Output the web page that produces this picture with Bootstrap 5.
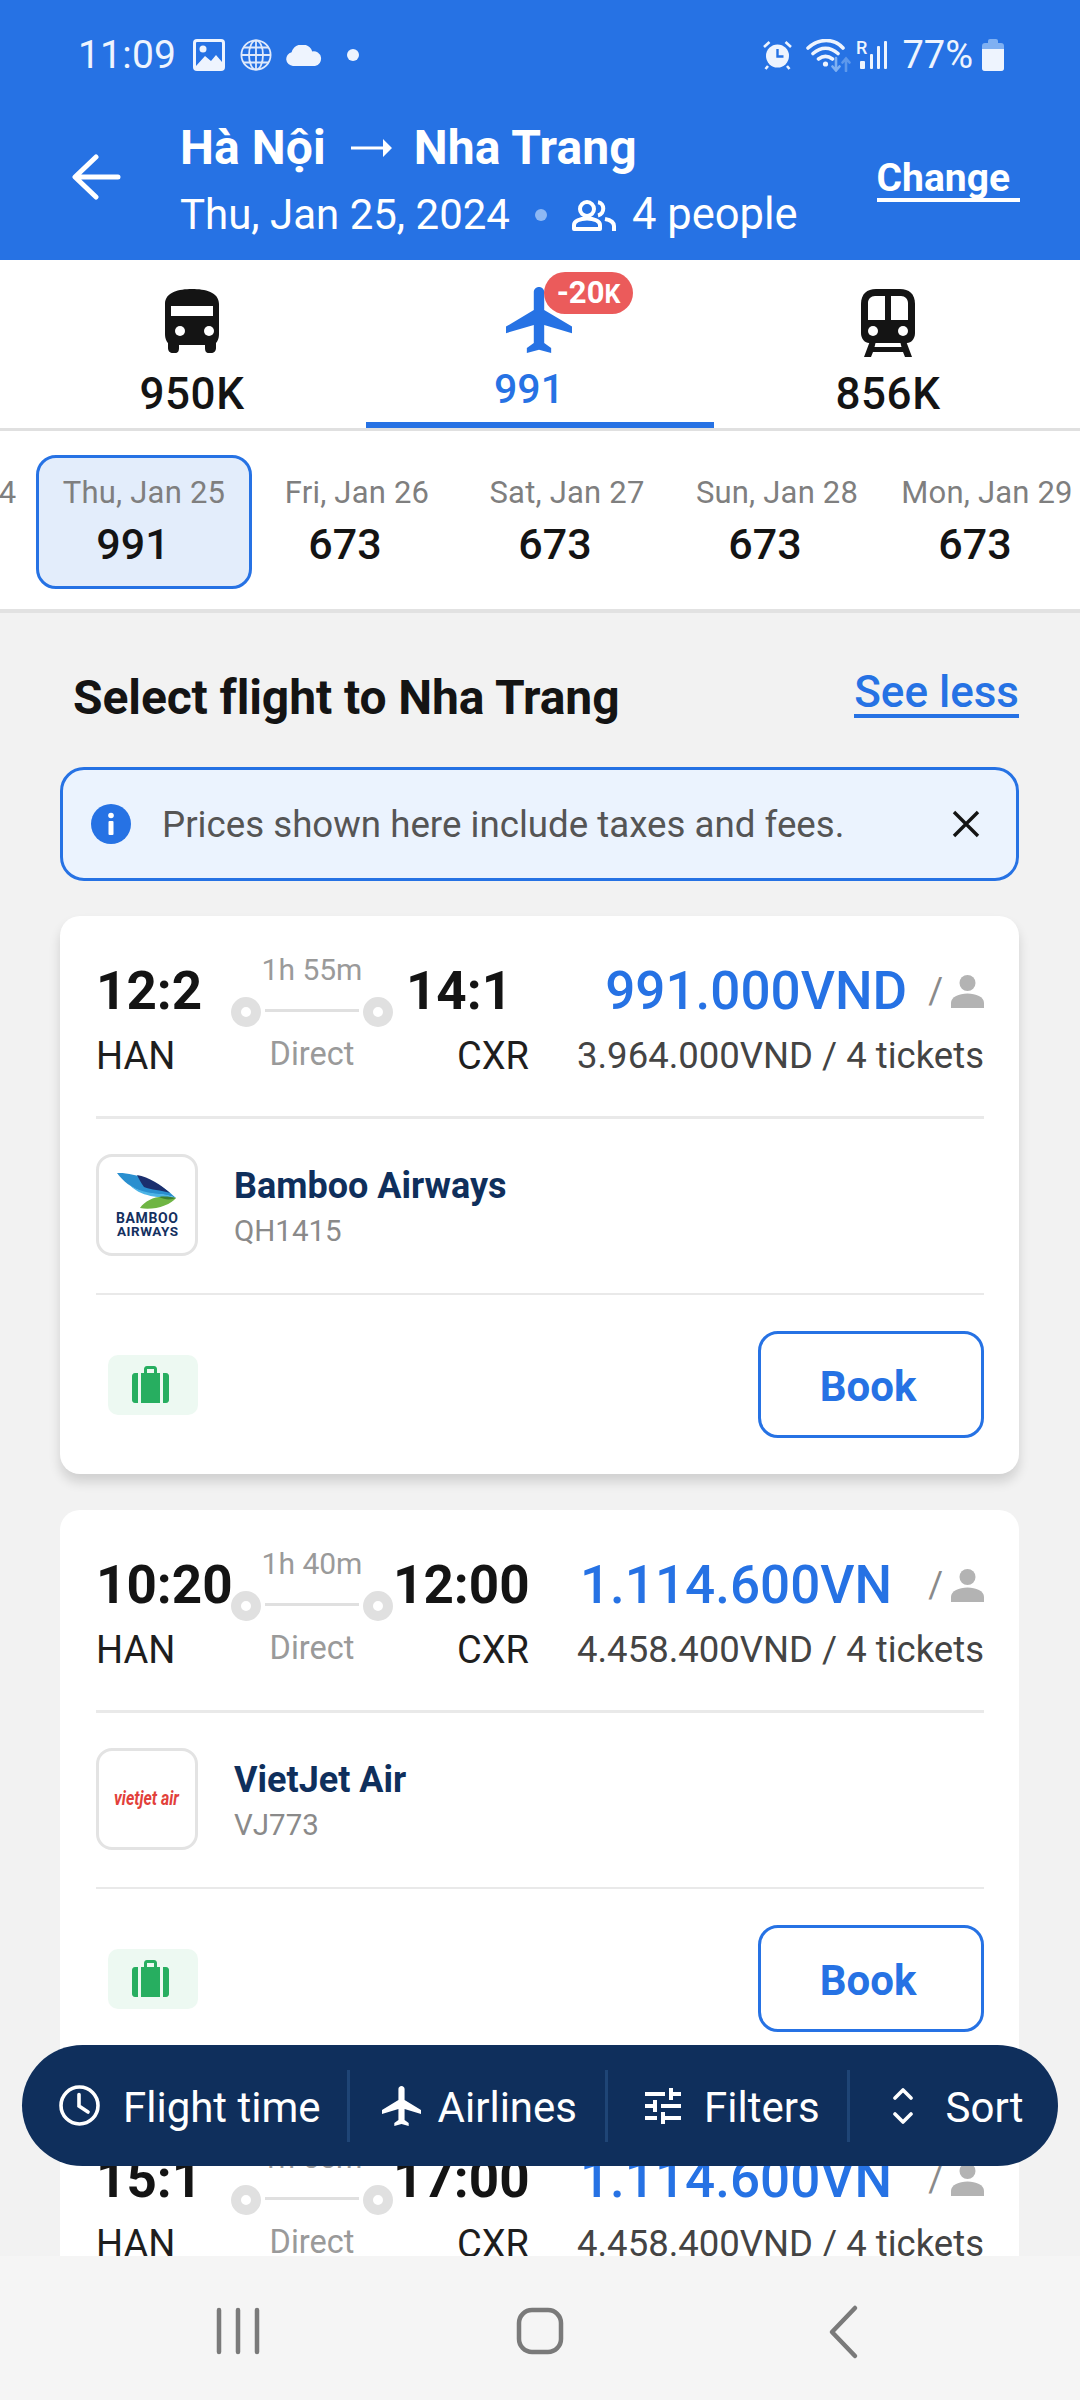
<!DOCTYPE html>
<html lang="en">
<head>
<meta charset="utf-8">
<title>Select flight</title>
<link rel="stylesheet" href="https://cdn.jsdelivr.net/npm/bootstrap@5.3.0/dist/css/bootstrap.min.css">
<style>
:root{--brand:#2672e4;--navy:#0f2f5c;}
html,body{margin:0;background:#f2f2f2;}
body{font-family:Roboto,"Liberation Sans",sans-serif;}
.screen{width:1080px;height:2400px;position:relative;overflow:hidden;}
.top-blue{background:var(--brand);height:260px;color:#fff;flex:none;}
.stat-row{height:110px;padding:0 76px 0 78px;color:#eef4fe;}
.stat-time{font-size:39px;line-height:1;letter-spacing:.2px;}
.stat-pct{font-size:38px;line-height:1;}
.sig-ic{overflow:visible;}
.route-row{padding-left:72px;padding-right:60px;height:127px;padding-top:8px;}
.back-ic{width:49px;height:46px;margin-right:59px;margin-top:36px;}
.route-title{font-size:48px;font-weight:700;line-height:60px;letter-spacing:.1px;}
.route-sub{font-size:42px;line-height:60px;margin-top:7px;}
.sub-people{font-size:43.500px;}
.sub-dot{width:12px;height:12px;border-radius:50%;background:#8db8f4;margin:0 25px 0 25px;}
.change-link{font-size:39px;font-weight:700;line-height:40px;color:#fff;text-decoration:none;border-bottom:4px solid #fff;padding:3px 10px 0 0;margin-top:37px;}
.mode-tabs{height:171px;background:#fff;border-bottom:3px solid #e0e0e0;flex:none;}
.mode-side{width:366px;padding-top:29px;}
.mode-side.lft{padding-left:18px;}
.mode-side.rgt{padding-right:18px;}
.mode-mid{width:348px;height:168px;border-bottom:6px solid var(--brand);padding-top:27px;position:relative;}
.mode-price{font-size:44px;line-height:48px;font-weight:500;color:#141414;letter-spacing:.6px;}
.mode-mid .mode-price{font-size:41px;color:var(--brand);margin-right:22px;letter-spacing:0;margin-top:12px;}
.promo-tag{position:absolute;left:178px;top:12px;width:89px;height:42px;border-radius:21px;background:#eb5b5b;color:#fff;font-size:31px;font-weight:700;line-height:42px;text-align:center;}
.promo-tag small{font-size:25px;font-weight:700;}
.date-strip{height:182px;background:#fff;border-bottom:4px solid #e2e2e2;flex:none;overflow:hidden;}
.date-track{margin-left:-174px;padding-top:24px;}
.date-cell{width:210px;height:134px;flex:none;text-align:center;padding-top:18px;white-space:nowrap;}
.date-cell.on{width:216px;background:#e3edfb;border:3px solid var(--brand);border-radius:20px;padding-top:15px;}
.date-lbl{font-size:31px;line-height:40px;color:#7f7f7f;letter-spacing:.2px;}
.date-num{font-size:43px;line-height:50px;font-weight:500;color:#141414;margin-right:24px;margin-top:6px;}
.date-cell.on .date-num{margin-right:22px;}
.list-wrap{flex:1 1 auto;overflow:hidden;padding:0 61px 0 60px;background:#f2f2f2;min-height:0;}
.list-head{padding:57px 0 0 13px;height:154px;}
.list-title{font-size:48px;line-height:56px;font-weight:700;color:#141414;margin:0;letter-spacing:-.1px;}
.see-link{font-size:44px;line-height:44px;font-weight:500;color:var(--brand);text-decoration:none;border-bottom:4px solid var(--brand);}
.tip-box{height:114px;border:3px solid var(--brand);border-radius:24px;background:#ebf3fe;padding:0 36px 0 28px;margin:0 0 35px;color:#555;}
.tip-text{font-size:36.700px;line-height:46px;margin-left:31px;padding-top:2px;}
.fare-card{height:558px;border:0;border-radius:20px;margin-bottom:36px;padding:36px 35px 36px 36px;background:#fff;}
.fare-card.lift{box-shadow:0 8px 12px rgba(0,0,0,.14);}
.leg-col{width:135px;padding-top:7px;}
.leg-col.arr{width:136px;}
.clock-txt{font-size:53px;line-height:64px;font-weight:700;color:#141414;white-space:nowrap;}
.leg-col.arr .clock-txt{width:132px;text-align:center;}
.port-txt{font-size:38px;line-height:46px;color:#1e1e1e;margin-top:10px;}
.leg-col.arr .port-txt{text-align:right;}
.track-col{width:162px;text-align:center;}
.track-txt{font-size:30px;line-height:36px;color:#9a9a9a;white-space:nowrap;}
.track-txt.via{font-size:32.500px;}
.track-line{height:30px;margin:9px 0;}
.track-pin{width:30px;height:30px;border-radius:50%;border:10px solid #e0e0e0;background:#fff;flex:none;}
.track-bar{flex:1 1 auto;height:3px;background:#e0e0e0;margin:0 4px 4px;}
.cost-col{flex:1 1 auto;padding-top:7px;text-align:right;}
.cost-txt{font-size:53px;line-height:64px;font-weight:500;color:var(--brand);white-space:nowrap;}
.cost-slash{font-size:36px;color:#8a8a8a;margin:0 8px 0 21px;line-height:64px;}
.cost-slash.wide{margin-left:36px;}
.cost-sub{font-size:36.500px;line-height:46px;color:#444;margin-top:10px;white-space:nowrap;}
.rule{height:3px;background:#e9e9e9;}
.rule.one{margin-top:37px;}
.carrier-row{margin:35px 0 37px;height:102px;}
.carrier-logo{width:102px;height:102px;border:3px solid #e3e3e3;border-radius:16px;flex:none;margin-right:36px;}
.carrier-text{padding-top:7px;}
.carrier-name{font-size:36px;line-height:46px;font-weight:700;color:#0f2f5c;}
.carrier-code{font-size:29.500px;line-height:44px;color:#8a8a8a;}
.foot-row{margin-top:36px;}
.bag-chip{width:90px;height:60px;border-radius:10px;background:#edf9f2;margin-left:12px;}
.bag-chip svg{margin-right:6px;}
.book-btn{width:226px;height:107px;border:3px solid var(--brand);border-radius:20px;background:#fff;color:var(--brand);font-size:42px;font-weight:700;line-height:1;padding:4px 12px 0 6px;}
.book-btn:hover{background:#fff;color:var(--brand);border-color:var(--brand);}
.float-bar{position:absolute;left:22px;top:2045px;width:1036px;height:121px;border-radius:61px;background:var(--navy);color:#fff;padding-left:37px;}
.float-lbl{font-size:42px;line-height:50px;color:#fff;white-space:nowrap;padding-top:5px;}
.float-sep{width:3px;height:72px;background:#1f4576;flex:none;}
.sys-nav{height:144px;background:#f5f5f5;flex:none;position:relative;z-index:2;}
</style>
</head>
<body>
<div class="screen d-flex flex-column">
  <header class="top-blue">
    <div class="stat-row d-flex align-items-center justify-content-between">
      <div class="d-flex align-items-center">
        <span class="stat-time">11:09</span>
        <svg width="32" height="32" viewBox="0 0 32 32" style="margin-left:17px"><rect width="32" height="32" rx="4" fill="#eef4fe"/><rect x="3" y="3" width="26" height="26" rx="1" fill="#2672e4"/><path d="M3 27 L12 17 L18 22 L23 16 L29 23 V29 H3Z" fill="#eef4fe"/><circle cx="10" cy="10" r="3.500" fill="#eef4fe"/></svg>
        <svg width="32" height="32" viewBox="0 0 32 32" style="margin-left:15px" fill="none" stroke="#dfe9fb" stroke-width="1.800"><circle cx="16" cy="16" r="14.600"/><ellipse cx="16" cy="16" rx="7" ry="14.600"/><path d="M16 1.500V30.500M1.500 16H30.500M4 8.500H28M4 23.500H28"/></svg>
        <svg width="37" height="21" viewBox="0 0 37 21" style="margin-left:13px"><path d="M8 21a7 7 0 0 1-1.400-13.800A11 11 0 0 1 27.300 6.400 7.400 7.400 0 0 1 30 21Z" fill="#eef4fe"/></svg>
        <span class="rounded-circle" style="width:12px;height:12px;background:#eef4fe;margin-left:25px"></span>
      </div>
      <div class="d-flex align-items-center">
        <svg width="29" height="30" viewBox="0 0 29 30"><circle cx="14.500" cy="16" r="11.500" fill="#eef4fe"/><path d="M14.500 9v7.500h6" stroke="#2672e4" stroke-width="2.400" fill="none"/><path d="M1 7 6.500 2M28 7 22.500 2M5 26 2.500 29M24 26l2.500 3" stroke="#eef4fe" stroke-width="2.600" fill="none"/></svg>
        <svg width="46" height="33" viewBox="0 0 46 33" style="margin-left:14px" fill="none" stroke-linecap="round"><path d="M2 9C13-1 28-1 37 9M7 14.500C15 7.500 24 7.500 32 14.500M12.500 20C17 16.500 22 16.500 26.500 20" stroke="#eef4fe" stroke-width="3.600"/><circle cx="19.500" cy="25" r="2.600" fill="#eef4fe"/><path d="M30 19V31M26.500 27.500 30 31.500 33.500 27.500" stroke="#7fb0f2" stroke-width="2.600"/><path d="M40 32V20M36.500 23.500 40 19.500 43.500 23.500" stroke="#5d98ec" stroke-width="2.600"/></svg>
        <svg class="sig-ic" width="32" height="32" viewBox="0 0 32 32" style="margin-left:4px"><rect x="4" y="22" width="5" height="8" rx="1" fill="#eef4fe"/><rect x="14" y="15" width="3" height="15" rx="1" fill="#eef4fe"/><rect x="21" y="7" width="3" height="23" rx="1" fill="#eef4fe"/><rect x="28" y="2" width="3" height="28" rx="1" fill="#eef4fe"/><text x="0" y="15" font-family="Roboto" font-size="18" font-weight="500" fill="#eef4fe">R</text></svg>
        <span class="stat-pct" style="margin-left:14px">77%</span>
        <svg width="22" height="32" viewBox="0 0 22 32" style="margin-left:9px"><path d="M6 2a2 2 0 0 1 2-2h6a2 2 0 0 1 2 2v2h3a3 3 0 0 1 3 3v22a3 3 0 0 1-3 3H3a3 3 0 0 1-3-3V7a3 3 0 0 1 3-3h3Z" fill="#7fb0f2"/><path d="M0 10H22V29a3 3 0 0 1-3 3H3a3 3 0 0 1-3-3Z" fill="#eef4fe"/></svg>
      </div>
    </div>
    <div class="route-row d-flex align-items-start">
      <svg class="back-ic" viewBox="0 0 49 46" fill="none" stroke="#fff" stroke-width="5" stroke-linecap="round" stroke-linejoin="round"><path d="M46 23H4M24 3 3 23 24 43"/></svg>
      <div class="flex-grow-1">
        <div class="route-title d-flex align-items-center">Hà Nội
          <svg width="41" height="18" viewBox="0 0 41 18" style="margin:0 22px 0 25px"><path d="M0 7.500H32V0L41 9 32 18V10.500H0Z" fill="#fff"/></svg>Nha Trang</div>
        <div class="route-sub d-flex align-items-center">Thu, Jan 25, 2024<span class="sub-dot"></span>
          <svg width="44" height="31" viewBox="0 0 44 31" fill="none" stroke="#fff" stroke-width="4" style="margin-right:16px"><circle cx="15" cy="9" r="7"/><path d="M2 29V25C2 21 8 18.500 15 18.500S28 21 28 25V29ZM26 2.200C33 3 33 14 26 15.500M33 19C38 20 42 22 42 26V31" stroke-linejoin="round"/></svg><span class="sub-people">4 people</span></div>
      </div>
      <a class="change-link" href="#">Change</a>
    </div>
  </header>

  <section class="mode-tabs d-flex">
    <div class="mode-side lft d-flex flex-column align-items-center">
      <svg width="54" height="64" viewBox="0 0 54 64"><path d="M0 15C0 3 14 0 27 0S54 3 54 15V45C54 50 52 53 51 54V59C51 62 49 64 46 64H44C41 64 40 62 40 59V56H14V59C14 62 13 64 10 64H8C5 64 3 62 3 59V54C2 53 0 50 0 45Z" fill="#141414"/><rect x="6" y="17" width="42" height="10" fill="#fff"/><circle cx="15" cy="42" r="5" fill="#fff"/><circle cx="44" cy="42" r="5" fill="#fff"/></svg>
      <div class="mode-price" style="margin-top:17px">950K</div>
    </div>
    <div class="mode-mid d-flex flex-column align-items-center">
      <svg width="66" height="66" viewBox="2 2 19 20" preserveAspectRatio="none" style="margin-right:2px"><path d="M21 16v-2l-8-5V3.500c0-.83-.67-1.500-1.500-1.500S10 2.670 10 3.500V9l-8 5v2l8-2.500V19l-2 1.500V22l3.500-1 3.500 1v-1.500L13 19v-5.500l8 2.500z" fill="#2672e4"/></svg>
      <div class="mode-price">991</div>
      <span class="promo-tag">-20<small>K</small></span>
    </div>
    <div class="mode-side rgt d-flex flex-column align-items-center">
      <svg width="54" height="68" viewBox="0 0 54 68"><path d="M0 15C0 5 6 0 15 0H39C48 0 54 5 54 15V44C54 50 50 54 46 54H8C4 54 0 50 0 44Z" fill="#141414"/><path d="M7 31V14C7 10 10 7 14 7H24V31ZM30 7H40C44 7 47 10 47 14V31H30Z" fill="#fff"/><circle cx="12" cy="42" r="5" fill="#fff"/><circle cx="42" cy="42" r="5" fill="#fff"/><path d="M9 52H15L13.500 58H40.500L39 52H45L51 68H44L42 63H12L10 68H3Z" fill="#141414"/></svg>
      <div class="mode-price" style="margin-top:13px">856K</div>
    </div>
  </section>

  <section class="date-strip">
    <div class="date-track d-flex">
      <div class="date-cell"><div class="date-lbl">Wed, Jan 24</div><div class="date-num">673</div></div>
      <div class="date-cell on"><div class="date-lbl">Thu, Jan 25</div><div class="date-num">991</div></div>
      <div class="date-cell"><div class="date-lbl">Fri, Jan 26</div><div class="date-num">673</div></div>
      <div class="date-cell"><div class="date-lbl">Sat, Jan 27</div><div class="date-num">673</div></div>
      <div class="date-cell"><div class="date-lbl">Sun, Jan 28</div><div class="date-num">673</div></div>
      <div class="date-cell"><div class="date-lbl">Mon, Jan 29</div><div class="date-num">673</div></div>
    </div>
  </section>

  <main class="list-wrap">
    <div class="list-head d-flex justify-content-between align-items-start">
      <h1 class="list-title">Select flight to Nha Trang</h1>
      <a class="see-link" href="#">See less</a>
    </div>
    <div class="alert tip-box d-flex align-items-center justify-content-between">
      <div class="d-flex align-items-center">
        <svg width="40" height="40" viewBox="0 0 40 40"><circle cx="20" cy="20" r="20" fill="#2672e4"/><circle cx="20" cy="11.500" r="2.800" fill="#fff"/><rect x="17.500" y="17" width="5" height="14" rx="1" fill="#fff"/></svg>
        <span class="tip-text">Prices shown here include taxes and fees.</span>
      </div>
      <svg width="28" height="28" viewBox="0 0 28 28" stroke="#141414" stroke-width="3.400"><path d="M2 2 26 26M26 2 2 26"/></svg>
    </div>

    <article class="card fare-card lift">
      <div class="d-flex">
        <div class="leg-col"><div class="clock-txt">12:2</div><div class="port-txt">HAN</div></div>
        <div class="track-col">
          <div class="track-txt">1h 55m</div>
          <div class="track-line d-flex align-items-center"><span class="track-pin"></span><span class="track-bar"></span><span class="track-pin"></span></div>
          <div class="track-txt via">Direct</div>
        </div>
        <div class="leg-col arr"><div class="clock-txt">14:1</div><div class="port-txt">CXR</div></div>
        <div class="cost-col">
          <div class="d-flex justify-content-end align-items-center"><span class="cost-txt">991.000VND</span><span class="cost-slash">/</span>
            <svg width="33" height="33" viewBox="0 0 33 33" fill="#b3b3b3"><circle cx="16.500" cy="8" r="8"/><path d="M0 33V28C0 22 8 18.500 16.500 18.500S33 22 33 28V33Z"/></svg></div>
          <div class="cost-sub">3.964.000VND / 4 tickets</div>
        </div>
      </div>
      <div class="rule one"></div>
      <div class="carrier-row d-flex align-items-center">
        <div class="carrier-logo d-flex align-items-center justify-content-center">
          <svg width="96" height="96" viewBox="0 0 96 96"><path d="M18 16C34 15 60 24 77 41 66 36 54 38 44 35 32 31 24 24 18 16Z" fill="#2a8fcf"/><path d="M38 18C50 20 62 28 71 36 62 33 52 33 45 30 42 26 40 22 38 18Z" fill="#1b2f6e"/><path d="M30 27C38 34 50 36 60 37 66 37 72 39 77 41 62 41 40 40 30 27Z" fill="#4db4e6"/><path d="M41 51C46 44 56 39 66 40 70 40 74 40 77 41 72 48 54 54 41 51Z" fill="#6fb544"/><path d="M60 40C66 39 72 40 77 41 72 43 66 43 60 40Z" fill="#3f7f32"/><text x="17" y="66" font-family="Roboto" font-weight="700" font-size="14" textLength="62" fill="#14305f">BAMBOO</text><text x="18" y="79" font-family="Roboto" font-weight="700" font-size="13.500" textLength="61" fill="#14305f">AIRWAYS</text></svg>
        </div>
        <div class="carrier-text"><div class="carrier-name">Bamboo Airways</div><div class="carrier-code">QH1415</div></div>
      </div>
      <div class="rule"></div>
      <div class="foot-row d-flex justify-content-between align-items-center">
        <div class="bag-chip d-flex align-items-center justify-content-center">
          <svg width="37" height="37" viewBox="0 0 37 37"><path d="M12 8V3C12 1.500 13 0 15 0H22C24 0 25 1.500 25 3V8H22V3H15V8Z" fill="#27ae60"/><path d="M3 7H6V37H3C1 37 0 35.500 0 34V10C0 8.500 1 7 3 7ZM9 7H28V37H9ZM31 7H34C36 7 37 8.500 37 10V34C37 35.500 36 37 34 37H31Z" fill="#27ae60"/></svg>
        </div>
        <button class="btn book-btn" type="button">Book</button>
      </div>
    </article>

    <article class="card fare-card">
      <div class="d-flex">
        <div class="leg-col"><div class="clock-txt">10:20</div><div class="port-txt">HAN</div></div>
        <div class="track-col">
          <div class="track-txt">1h 40m</div>
          <div class="track-line d-flex align-items-center"><span class="track-pin"></span><span class="track-bar"></span><span class="track-pin"></span></div>
          <div class="track-txt via">Direct</div>
        </div>
        <div class="leg-col arr"><div class="clock-txt">12:00</div><div class="port-txt">CXR</div></div>
        <div class="cost-col">
          <div class="d-flex justify-content-end align-items-center"><span class="cost-txt">1.114.600VN</span><span class="cost-slash wide">/</span>
            <svg width="33" height="33" viewBox="0 0 33 33" fill="#b3b3b3"><circle cx="16.500" cy="8" r="8"/><path d="M0 33V28C0 22 8 18.500 16.500 18.500S33 22 33 28V33Z"/></svg></div>
          <div class="cost-sub">4.458.400VND / 4 tickets</div>
        </div>
      </div>
      <div class="rule one"></div>
      <div class="carrier-row d-flex align-items-center">
        <div class="carrier-logo d-flex align-items-center justify-content-center">
          <svg width="96" height="30" viewBox="0 0 96 30"><text x="15" y="21" font-family="Roboto" font-style="italic" font-weight="700" font-size="20" textLength="65" lengthAdjust="spacingAndGlyphs" fill="#e2403a">vietjet air</text></svg>
        </div>
        <div class="carrier-text"><div class="carrier-name">VietJet Air</div><div class="carrier-code">VJ773</div></div>
      </div>
      <div class="rule"></div>
      <div class="foot-row d-flex justify-content-between align-items-center">
        <div class="bag-chip d-flex align-items-center justify-content-center">
          <svg width="37" height="37" viewBox="0 0 37 37"><path d="M12 8V3C12 1.500 13 0 15 0H22C24 0 25 1.500 25 3V8H22V3H15V8Z" fill="#27ae60"/><path d="M3 7H6V37H3C1 37 0 35.500 0 34V10C0 8.500 1 7 3 7ZM9 7H28V37H9ZM31 7H34C36 7 37 8.500 37 10V34C37 35.500 36 37 34 37H31Z" fill="#27ae60"/></svg>
        </div>
        <button class="btn book-btn" type="button">Book</button>
      </div>
    </article>

    <article class="card fare-card">
      <div class="d-flex">
        <div class="leg-col"><div class="clock-txt">15:1</div><div class="port-txt">HAN</div></div>
        <div class="track-col">
          <div class="track-txt">1h 55m</div>
          <div class="track-line d-flex align-items-center"><span class="track-pin"></span><span class="track-bar"></span><span class="track-pin"></span></div>
          <div class="track-txt via">Direct</div>
        </div>
        <div class="leg-col arr"><div class="clock-txt">17:00</div><div class="port-txt">CXR</div></div>
        <div class="cost-col">
          <div class="d-flex justify-content-end align-items-center"><span class="cost-txt">1.114.600VN</span><span class="cost-slash wide">/</span>
            <svg width="33" height="33" viewBox="0 0 33 33" fill="#b3b3b3"><circle cx="16.500" cy="8" r="8"/><path d="M0 33V28C0 22 8 18.500 16.500 18.500S33 22 33 28V33Z"/></svg></div>
          <div class="cost-sub">4.458.400VND / 4 tickets</div>
        </div>
      </div>
    </article>
  </main>

  <nav class="sys-nav d-flex align-items-start">
    <svg width="1080" height="144" viewBox="0 0 1080 144" fill="none" stroke="#7a7a7a" stroke-width="4.500" stroke-linecap="round" stroke-linejoin="round"><path d="M219 54V96M238 54V96M257 54V96"/><rect x="519" y="54" width="42" height="42" rx="13"/><path d="M855 52 832 76 855 100"/></svg>
  </nav>

  <div class="float-bar d-flex align-items-center">
    <svg width="41" height="41" viewBox="0 0 41 41" fill="none" stroke="#fff" stroke-width="3.600" stroke-linecap="round"><circle cx="20.500" cy="20.500" r="18.500"/><path d="M20 9.500V21L29 27"/></svg>
    <span class="float-lbl" style="margin-left:23px">Flight time</span>
    <span class="float-sep" style="margin-left:26px"></span>
    <svg width="39" height="40" viewBox="2 2 19 20" preserveAspectRatio="none" style="margin-left:32px"><path d="M21 16v-2l-8-5V3.500c0-.83-.67-1.500-1.500-1.500S10 2.670 10 3.500V9l-8 5v2l8-2.500V19l-2 1.500V22l3.500-1 3.500 1v-1.500L13 19v-5.500l8 2.500z" fill="#fff"/></svg>
    <span class="float-lbl" style="margin-left:17px">Airlines</span>
    <span class="float-sep" style="margin-left:28px"></span>
    <svg width="36" height="36" viewBox="3 3 18 18" style="margin-left:37px"><path d="M3 17v2h6v-2H3zM3 5v2h10V5H3zm10 16v-2h8v-2h-8v-2h-2v6h2zM7 9v2H3v2h4v2h2V9H7zm14 4v-2H11v2h10zm-6-4h2V7h4V5h-4V3h-2v6z" fill="#fff"/></svg>
    <span class="float-lbl" style="margin-left:23px">Filters</span>
    <span class="float-sep" style="margin-left:27px"></span>
    <svg width="20" height="36" viewBox="0 0 20 36" fill="none" stroke="#fff" stroke-width="3.600" stroke-linecap="round" stroke-linejoin="round" style="margin-left:43px"><path d="M2 10 10 2 18 10M2 26 10 34 18 26"/></svg>
    <span class="float-lbl" style="margin-left:33px">Sort</span>
  </div>
</div>
<script src="https://cdn.jsdelivr.net/npm/bootstrap@5.3.0/dist/js/bootstrap.bundle.min.js"></script>
</body>
</html>
